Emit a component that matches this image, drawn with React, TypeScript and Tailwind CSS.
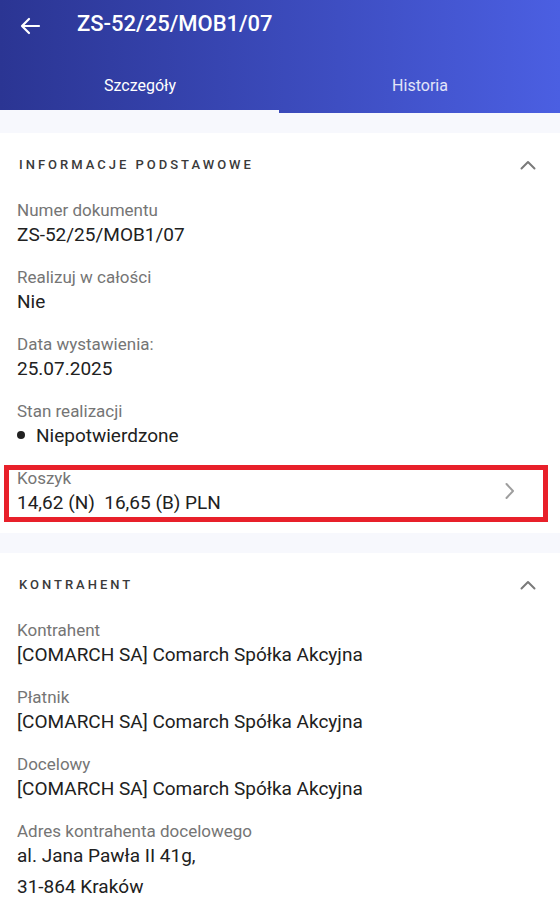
import { ReactNode } from "react";

function ChevronUp() {
  return (
    <svg width="24" height="24" viewBox="0 0 24 24" fill="none">
      <path d="M5.5 15.5L12 9l6.5 6.5" stroke="#7a7a7a" strokeWidth="2" strokeLinecap="round" strokeLinejoin="round" />
    </svg>
  );
}

function ChevronRight() {
  return (
    <svg width="24" height="24" viewBox="0 0 24 24" fill="none">
      <path d="M9.5 5l6.5 7-6.5 7" stroke="#9e9e9e" strokeWidth="2" strokeLinecap="round" strokeLinejoin="round" />
    </svg>
  );
}

function Field({ label, children }: { label: string; children: ReactNode }) {
  return (
    <div className="px-[17px]">
      <div className="text-[17px] leading-6 text-[#757575]">{label}</div>
      <div className="text-[19px] leading-[26px] text-[#212121]">{children}</div>
    </div>
  );
}

function SectionHeader({ title }: { title: string }) {
  return (
    <div className="flex h-16 items-center justify-between pl-[19px] pr-[20px]">
      <span className="text-[13px] font-medium tracking-[3px] text-[#3a3a3a]">{title}</span>
      <ChevronUp />
    </div>
  );
}

export default function App() {
  return (
    <div className="min-h-screen w-[560px] bg-[#f7f8fd] font-['Roboto',sans-serif]">
      {/* Header */}
      <div className="bg-gradient-to-r from-[#2b3593] to-[#4b5fe2] text-white">
        <div className="flex h-12 items-center pl-[18px]">
          <svg width="24" height="24" viewBox="0 0 24 24" fill="none" className="mt-[3px]">
            <path d="M21 12H4.5M11 5l-7 7 7 7" stroke="white" strokeWidth="2.2" strokeLinecap="round" strokeLinejoin="round" />
          </svg>
          <h1 className="ml-[35px] text-[22px] font-medium leading-[30px]">ZS-52/25/MOB1/07</h1>
        </div>
        <div className="mt-[14px] flex h-12 items-center text-base">
          <div className="flex-1 text-center">Szczegóły</div>
          <div className="flex-1 text-center text-white/85">Historia</div>
        </div>
        <div className="flex h-[3px]">
          <div className="w-[279px] bg-[#f7f8fd]" />
        </div>
      </div>

      {/* Informacje podstawowe */}
      <div className="mt-5 bg-white pb-[17px]">
        <SectionHeader title="INFORMACJE PODSTAWOWE" />
        <div className="flex flex-col gap-[17px] pt-px">
          <Field label="Numer dokumentu">ZS-52/25/MOB1/07</Field>
          <Field label="Realizuj w całości">Nie</Field>
          <Field label="Data wystawienia:">25.07.2025</Field>
          <Field label="Stan realizacji">
            <span className="flex items-center">
              <span className="mb-[3px] mr-[11px] h-2 w-2 rounded-full bg-[#212121]" />
              Niepotwierdzone
            </span>
          </Field>
          <div className="relative flex items-center justify-between pl-[17px] pr-[39px]">
            <div>
              <div className="text-[17px] leading-6 text-[#757575]">Koszyk</div>
              <div className="whitespace-pre text-[19px] leading-[26px] text-[#212121]">14,62 (N)  16,65 (B) PLN</div>
            </div>
            <ChevronRight />
            <div className="pointer-events-none absolute left-[4px] right-[12px] top-[-1px] bottom-[-6px] border-[5px] border-[#e8202a]" />
          </div>
        </div>
      </div>

      {/* Kontrahent */}
      <div className="mt-5 bg-white pb-4">
        <SectionHeader title="KONTRAHENT" />
        <div className="flex flex-col gap-[17px] pt-px">
          <Field label="Kontrahent">[COMARCH SA] Comarch Spółka Akcyjna</Field>
          <Field label="Płatnik">[COMARCH SA] Comarch Spółka Akcyjna</Field>
          <Field label="Docelowy">[COMARCH SA] Comarch Spółka Akcyjna</Field>
          <Field label="Adres kontrahenta docelowego">
            <div>al. Jana Pawła II 41g,</div>
            <div className="mt-[5px]">31-864 Kraków</div>
          </Field>
        </div>
      </div>
    </div>
  );
}
